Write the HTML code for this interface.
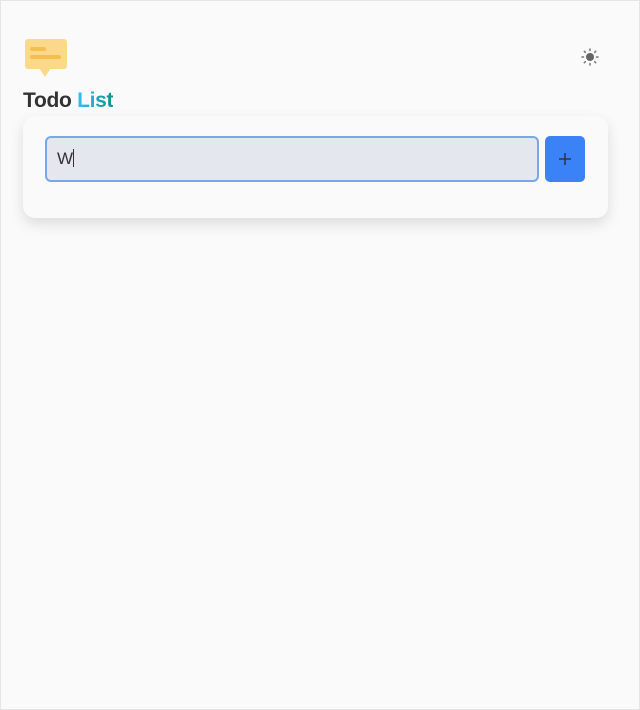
<!DOCTYPE html>
<html><head><style>
html,body{margin:0;padding:0}
body{width:638px;height:708px;border:1px solid #e5e5e5;background:#fafafa;position:relative;font-family:"Liberation Sans",sans-serif;overflow:hidden}
.title{position:absolute;left:22px;top:88px;font-size:21px;font-weight:bold;letter-spacing:-0.3px;color:#333}
.title span{background:linear-gradient(90deg,#38bdf8,#0d9488);-webkit-background-clip:text;color:transparent}
.card{position:absolute;left:22px;top:115px;width:585px;height:102px;background:#fafafa;border-radius:12px;box-shadow:0 6px 14px rgba(0,0,0,.12)}
.inp{position:absolute;left:22px;top:20px;height:42px;background:#e5e7ef;border:2px solid #7aa7ec;border-radius:6px;font-size:17px;color:#333;line-height:42px;padding-left:10px;box-sizing:content-box;width:480px}
.btn{position:absolute;left:522px;top:20px;width:40px;height:46px;background:#3b82f6;border-radius:5px}
</style></head><body>
<svg style="position:absolute;left:23px;top:37px" width="44" height="40" viewBox="0 0 44 40">
<rect x="1" y="1" width="42" height="30" rx="3" fill="#fcd88a"/>
<path d="M15 30 L21 39 L27 30 Z" fill="#fcd88a"/>
<rect x="6" y="9" width="16" height="4" rx="2" fill="#f5bf4f"/>
<rect x="6" y="17" width="31" height="4" rx="2" fill="#f5bf4f"/>
</svg>
<svg style="position:absolute;left:579px;top:46px" width="20" height="20" viewBox="0 0 20 20">
<circle cx="10" cy="10" r="4" fill="#666"/>
<g stroke="#777" stroke-width="1.5" stroke-linecap="round">
<path d="M10 2v1.5M10 16.5V18M2 10h1.5M16.5 10H18M4.3 4.3l1 1M14.7 14.7l1 1M4.3 15.7l1-1M14.7 5.3l1-1"/></g>
</svg>
<div class="title">Todo <span>List</span></div>
<div class="card">
<div class="inp">W<span style="display:inline-block;width:1px;height:18px;background:#333;vertical-align:-3px"></span></div>
<div class="btn"><svg width="40" height="46" viewBox="0 0 40 46"><path d="M20 17v12M14 23h12" stroke="#2d3748" stroke-width="1.6"/></svg></div>
</div>
</body></html>
